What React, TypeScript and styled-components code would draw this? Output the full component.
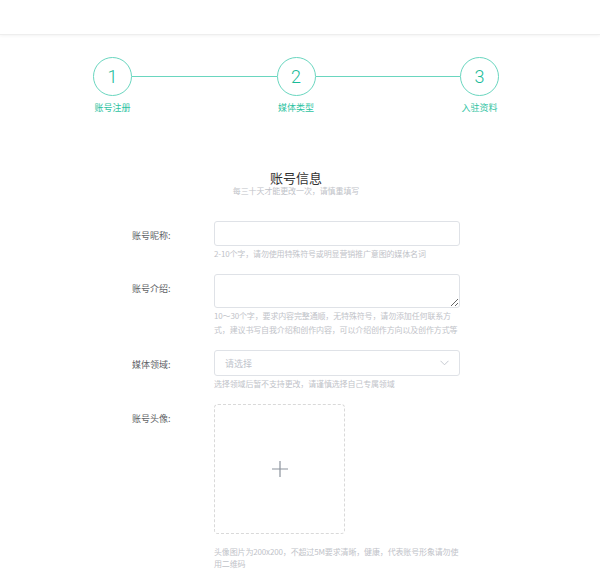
import React from 'react';
import styled, { createGlobalStyle } from 'styled-components';

const GlobalStyle = createGlobalStyle`
  html, body {
    margin: 0;
    padding: 0;
    background: #fff;
  }
  body {
    font-family: "Noto Sans CJK SC", "Noto Sans", "Liberation Sans", sans-serif;
    color: #333;
  }
  * {
    box-sizing: border-box;
  }
`;

const TEAL_LINE = '#6ad6bf';
const TEAL_TEXT = '#2dc3a2';
const HINT = '#bfc3c9';
const BORDER = '#dfe2e7';

const Header = styled.header`
  height: 35px;
  background: #fff;
  border-bottom: 1px solid #eeeeee;
  box-shadow: 0 1px 3px rgba(0, 0, 0, 0.05);
`;

const Main = styled.main`
  width: 592px;
  display: flex;
  flex-direction: column;
  align-items: center;
`;

const StepsBar = styled.div`
  width: 406px;
  margin-top: 22px;
  display: flex;
  align-items: flex-start;
`;

const Step = styled.div`
  width: 39px;
  display: flex;
  flex-direction: column;
  align-items: center;
`;

const Circle = styled.div`
  width: 39px;
  height: 39px;
  border: 1px solid ${TEAL_LINE};
  border-radius: 50%;
  display: flex;
  align-items: center;
  justify-content: center;
  font-family: Roboto, "Liberation Sans", sans-serif;
  font-weight: 300;
  font-size: 18px;
  color: #18bb98;
`;

const StepLabel = styled.div`
  margin-top: 6px;
  font-size: 9px;
  line-height: 12px;
  white-space: nowrap;
  color: ${TEAL_TEXT};
`;

const Connector = styled.div`
  flex: 1;
  height: 1px;
  margin-top: 19px;
  background: ${TEAL_LINE};
`;

const Title = styled.h2`
  margin: 57px 0 0;
  font-size: 13px;
  font-weight: 400;
  line-height: 14px;
  color: #333;
`;

const Subtitle = styled.div`
  margin-top: 2px;
  font-size: 8px;
  line-height: 8px;
  letter-spacing: -0.1px;
  color: ${HINT};
`;

const Form = styled.form`
  margin-top: 26px;
  display: flex;
  flex-direction: column;
  gap: 13px;
`;

const Row = styled.div`
  display: grid;
  grid-template-columns: 82px 246px;
`;

const Label = styled.label`
  padding-top: 2px;
  font-size: 9px;
  line-height: 26px;
  color: #606266;
`;

const Control = styled.div`
  display: flex;
  flex-direction: column;
`;

const TextInput = styled.input`
  height: 25px;
  width: 100%;
  border: 1px solid ${BORDER};
  border-radius: 3px;
  outline: none;
  padding: 0 10px;
  font-size: 9px;
  font-family: inherit;
`;

const TextArea = styled.textarea`
  display: block;
  height: 34px;
  width: 100%;
  border: 1px solid ${BORDER};
  border-radius: 3px;
  outline: none;
  padding: 4px 10px;
  font-size: 9px;
  font-family: inherit;
  resize: vertical;
`;

const SelectBox = styled.div`
  height: 26px;
  border: 1px solid ${BORDER};
  border-radius: 3px;
  padding: 0 10px;
  display: flex;
  align-items: center;
  justify-content: space-between;
  font-size: 9px;
  color: #c0c4cc;
`;

const Upload = styled.div`
  width: 131px;
  height: 130px;
  border: 1px dashed #d9d9d9;
  border-radius: 4px;
  display: flex;
  align-items: center;
  justify-content: center;
`;

const Hint = styled.div<{ $gap?: number; $lh?: number }>`
  margin-top: ${(p) => p.$gap ?? 1}px;
  font-size: 8px;
  line-height: ${(p) => p.$lh ?? 14}px;
  letter-spacing: -0.15px;
  color: ${HINT};
`;

const steps = ['账号注册', '媒体类型', '入驻资料'];

export default function App() {
  return (
    <>
      <GlobalStyle />
      <Header />
      <Main>
        <StepsBar>
          {steps.map((s, i) => (
            <React.Fragment key={s}>
              {i > 0 && <Connector />}
              <Step>
                <Circle>{i + 1}</Circle>
                <StepLabel>{s}</StepLabel>
              </Step>
            </React.Fragment>
          ))}
        </StepsBar>

        <Title>账号信息</Title>
        <Subtitle>每三十天才能更改一次，请慎重填写</Subtitle>

        <Form>
          <Row>
            <Label>账号昵称:</Label>
            <Control>
              <TextInput />
              <Hint>2-10个字，请勿使用特殊符号或明显营销推广意图的媒体名词</Hint>
            </Control>
          </Row>
          <Row>
            <Label>账号介绍:</Label>
            <Control>
              <TextArea />
              <Hint>
                10～30个字，要求内容完整通顺，无特殊符号，请勿添加任何联系方式，建议书写自我介绍和创作内容，可以介绍创作方向以及创作方式等
              </Hint>
            </Control>
          </Row>
          <Row>
            <Label>媒体领域:</Label>
            <Control>
              <SelectBox>
                <span>请选择</span>
                <svg width="9" height="6" viewBox="0 0 9 6" fill="none">
                  <path d="M0.5 0.8L4.5 4.8L8.5 0.8" stroke="#c0c4cc" strokeWidth="0.9" />
                </svg>
              </SelectBox>
              <Hint>选择领域后暂不支持更改，请谨慎选择自己专属领域</Hint>
            </Control>
          </Row>
          <Row>
            <Label>账号头像:</Label>
            <Control>
              <Upload>
                <svg width="16" height="16" viewBox="0 0 16 16">
                  <path d="M8 0V16M0 8H16" stroke="#8c939d" strokeWidth="1.2" />
                </svg>
              </Upload>
              <Hint $gap={12} $lh={12}>
                头像图片为200x200，不超过5M要求清晰，健康，代表账号形象请勿使用二维码
              </Hint>
            </Control>
          </Row>
        </Form>
      </Main>
    </>
  );
}
